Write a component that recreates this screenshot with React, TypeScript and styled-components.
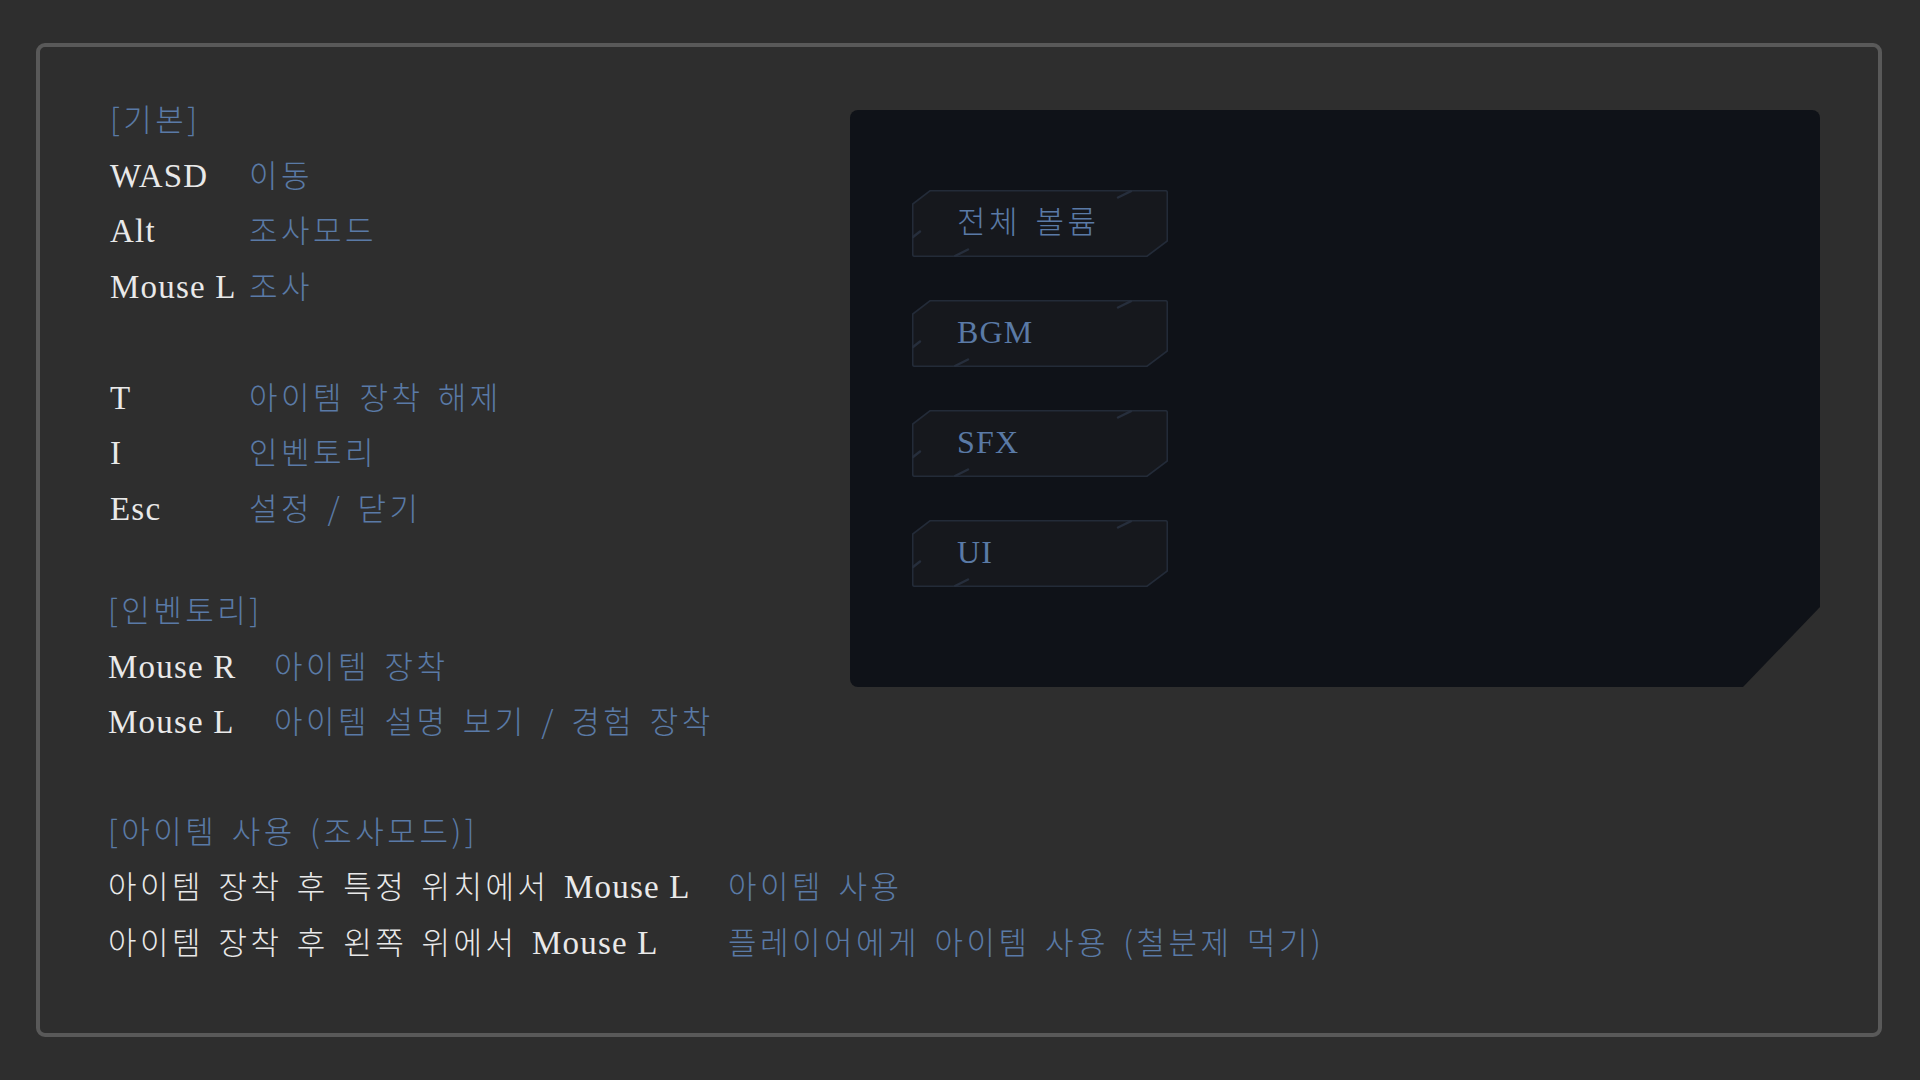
import React from 'react'
import styled, { createGlobalStyle } from 'styled-components'

const GlobalStyle = createGlobalStyle`
  html, body {
    margin: 0;
    padding: 0;
    background: #2e2e2e;
  }
  body {
    width: 1920px;
    height: 1080px;
    overflow: hidden;
    font-family: "Liberation Serif", "Noto Sans CJK KR", serif;
  }
`

const BLUE = '#5a7aa6'

const Frame = styled.div`
  box-sizing: border-box;
  margin: 43px 0 0 36px;
  width: 1846px;
  height: 994px;
  border: 4px solid #595959;
  border-radius: 9px;
  display: grid;
  grid-template-columns: minmax(0, 1fr) 970px;
  align-items: start;
  padding: 46px 58px 0 68px;
`

const Controls = styled.div`
  display: flex;
  flex-direction: column;
  min-width: 0;
`

const Section = styled.section<{ $top?: number; $indent?: number }>`
  margin-top: ${p => p.$top ?? 0}px;
  padding-left: ${p => p.$indent ?? 0}px;
`

const Header = styled.div`
  height: 55.5px;
  line-height: 55.5px;
  font-size: 33px;
  color: ${BLUE};
  white-space: pre;
`

const Row = styled.div<{ $gapBefore?: boolean }>`
  display: flex;
  height: 55.5px;
  line-height: 55.5px;
  font-size: 33px;
  white-space: pre;
  margin-top: ${p => (p.$gapBefore ? '55.5px' : '0')};
`

const Key = styled.div<{ $w: number }>`
  flex: none;
  width: ${p => p.$w}px;
  color: #e9e9e9;
`

const Action = styled.div`
  color: ${BLUE};
`

const Latin = styled.span`
  font-family: "Liberation Serif", serif;
  font-size: 1em;
  letter-spacing: 1.2px;
  line-height: 1;
`

const Hangul = styled.span`
  font-family: "Noto Sans CJK KR", sans-serif;
  font-size: 31px;
  font-weight: 300;
  letter-spacing: 3.5px;
  word-spacing: 4px;
  line-height: 1;
`

const Panel = styled.div`
  box-sizing: border-box;
  margin-top: 17px;
  height: 577px;
  background: #0f1218;
  border-radius: 8px;
  clip-path: polygon(0 0, 100% 0, 100% calc(100% - 80px), calc(100% - 77px) 100%, 0 100%);
  display: flex;
  flex-direction: column;
  gap: 43px;
  padding: 80px 0 0 62px;
`

const VolumeButton = styled.div`
  display: grid;
  width: 256px;
  height: 67px;
  & > * {
    grid-area: 1 / 1;
  }
`

const ButtonShape = styled.svg`
  display: block;
  width: 256px;
  height: 67px;
`

const ButtonLabel = styled.div`
  align-self: center;
  padding: 0 0 4px 45px;
  font-size: 32px;
  line-height: 40px;
  color: ${BLUE};
  white-space: pre;
`

// latin words go to the serif face, everything else (hangul, brackets) to the CJK face
const Text = ({ children }: { children: string }) => (
  <>
    {children
      .split(/([A-Za-z]+(?: [A-Za-z]+)*)/)
      .filter(Boolean)
      .map((part, i) =>
        /^[A-Za-z]/.test(part) ? <Latin key={i}>{part}</Latin> : <Hangul key={i}>{part}</Hangul>
      )}
  </>
)

const Shape = () => (
  <ButtonShape viewBox="0 0 256 67">
    <path
      d="M18 0.75 H253.5 Q255.25 0.75 255.25 2.5 V51 L235 66.25 H2.5 Q0.75 66.25 0.75 64.5 V14 Z"
      fill="#16181d"
      stroke="#232b38"
      strokeWidth="1.6"
    />
    <g stroke="#262e3c" strokeWidth="2.4" strokeLinecap="round">
      <path d="M206 7.5 L219 1.2" />
      <path d="M1 47 L8 41.5" />
      <path d="M43 66 L56 59.5" />
    </g>
  </ButtonShape>
)

const basic = [
  { key: 'WASD', action: '이동' },
  { key: 'Alt', action: '조사모드' },
  { key: 'Mouse L', action: '조사' },
  { key: 'T', action: '아이템 장착 해제', gap: true },
  { key: 'I', action: '인벤토리' },
  { key: 'Esc', action: '설정 / 닫기' },
]

const inventory = [
  { key: 'Mouse R', action: '아이템 장착' },
  { key: 'Mouse L', action: '아이템 설명 보기 / 경험 장착' },
]

const itemUse = [
  { key: '아이템 장착 후 특정 위치에서 Mouse L', action: '아이템 사용' },
  { key: '아이템 장착 후 왼쪽 위에서 Mouse L', action: '플레이어에게 아이템 사용 (철분제 먹기)' },
]

const volumes = ['전체 볼륨', 'BGM', 'SFX', 'UI']

export default function App() {
  return (
    <>
      <GlobalStyle />
      <Frame>
        <Controls>
          <Section $indent={2}>
            <Header><Text>[기본]</Text></Header>
            {basic.map(r => (
              <Row key={r.key + r.action} $gapBefore={r.gap}>
                <Key $w={139}><Text>{r.key}</Text></Key>
                <Action><Text>{r.action}</Text></Action>
              </Row>
            ))}
          </Section>

          <Section $top={47}>
            <Header><Text>[인벤토리]</Text></Header>
            {inventory.map(r => (
              <Row key={r.key}>
                <Key $w={166}><Text>{r.key}</Text></Key>
                <Action><Text>{r.action}</Text></Action>
              </Row>
            ))}
          </Section>

          <Section $top={54}>
            <Header><Text>[아이템 사용 (조사모드)]</Text></Header>
            {itemUse.map(r => (
              <Row key={r.key}>
                <Key $w={620}><Text>{r.key}</Text></Key>
                <Action><Text>{r.action}</Text></Action>
              </Row>
            ))}
          </Section>
        </Controls>

        <Panel>
          {volumes.map(v => (
            <VolumeButton key={v}>
              <Shape />
              <ButtonLabel><Text>{v}</Text></ButtonLabel>
            </VolumeButton>
          ))}
        </Panel>
      </Frame>
    </>
  )
}
